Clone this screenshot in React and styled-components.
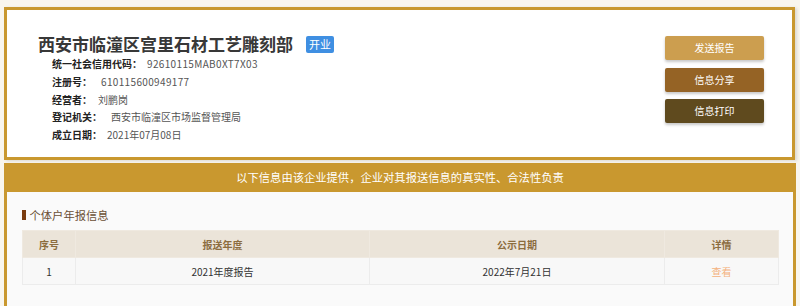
import React from "react";
import styled, { createGlobalStyle } from "styled-components";

const Global = createGlobalStyle`
  html, body { margin: 0; padding: 0; }
  body {
    background: #f9f6ee;
    font-family: "Noto Sans CJK SC", "Noto Sans", sans-serif;
    color: #333;
  }
`;

const Page = styled.div`
  padding: 7px 0 0 4px;
  width: 792px;
`;

const TopCard = styled.div`
  box-sizing: border-box;
  width: 791px;
  height: 153px;
  border: 3px solid #c9982f;
  background: #fff;
  box-shadow: 2px 1px 3px rgba(0, 0, 0, 0.12);
  display: flex;
  justify-content: space-between;
`;

const Info = styled.div`
  padding: 23px 0 0 31px;
`;

const TitleRow = styled.div`
  display: flex;
  align-items: center;
  gap: 13px;
  height: 22px;
`;

const Title = styled.h1`
  margin: 0;
  font-size: 17px;
  line-height: 22px;
  font-weight: 700;
  color: #383838;
`;

const Badge = styled.span`
  display: inline-flex;
  align-items: center;
  justify-content: center;
  width: 28px;
  height: 17px;
  border-radius: 2px;
  background: #3f8fe2;
  color: #fff;
  font-size: 11px;
  line-height: 17px;
`;

const Fields = styled.div`
  margin-left: 14px;
`;

const Field = styled.div`
  display: flex;
  align-items: center;
  height: 17.75px;
  font-size: 10px;
  line-height: 17.75px;
`;

const Label = styled.span`
  font-weight: 700;
  color: #222;
`;

const Value = styled.span`
  margin-left: ${(p) => p.$gap}px;
  color: #555;
  letter-spacing: ${(p) => (p.$latin ? "0.35px" : "0")};
`;

const Actions = styled.div`
  display: flex;
  flex-direction: column;
  gap: 7.5px;
  padding-top: 26px;
  margin-right: 28px;
`;

const ActionButton = styled.button`
  width: 99px;
  height: 24px;
  border: none;
  border-radius: 2px;
  background: ${(p) => p.$bg};
  color: #fff;
  font-family: inherit;
  font-size: 10px;
  line-height: 24px;
  padding: 0;
  box-shadow: 0 2px 3px rgba(0, 0, 0, 0.22);
  cursor: pointer;
`;

const Lower = styled.div`
  box-sizing: border-box;
  width: 792px;
  margin-top: 3px;
  border-left: 3px solid #c9982f;
  border-right: 3px solid #c9982f;
  background: #fafafa;
  padding-bottom: 22px;
`;

const Notice = styled.div`
  height: 29px;
  background: #c9982f;
  color: #fff;
  font-size: 11.3px;
  line-height: 29px;
  text-align: center;
`;

const Section = styled.div`
  padding: 14px 15px 0;
`;

const SectionTitle = styled.div`
  display: flex;
  align-items: center;
  gap: 4px;
  height: 18px;
  font-size: 11.3px;
  line-height: 18px;
  color: #6a4f35;
  &::before {
    content: "";
    width: 3.5px;
    height: 10px;
    background: #7a3c10;
  }
`;

const Table = styled.table`
  margin-top: 6px;
  width: 756px;
  border-collapse: collapse;
  table-layout: fixed;
  font-size: 10px;
`;

const Th = styled.th`
  height: 26px;
  padding: 0;
  background: #ebe4d9;
  color: #8c6d3f;
  font-weight: 600;
  border: 1px solid #efe9e0;
  text-align: center;
`;

const Td = styled.td`
  height: 26px;
  padding: 0;
  background: #f8f8f8;
  color: ${(p) => p.$color || "#333"};
  border: 1px solid #ececec;
  text-align: center;
`;

const fields = [
  ["统一社会信用代码：", "92610115MAB0XT7X03", 5, true],
  ["注册号：", "610115600949177", 9, true],
  ["经营者：", "刘鹏岗", 6, false],
  ["登记机关：", "西安市临潼区市场监督管理局", 9, false],
  ["成立日期：", "2021年07月08日", 5, false],
];

const buttons = [
  ["发送报告", "#cc9e4f"],
  ["信息分享", "#956325"],
  ["信息打印", "#5f4a1e"],
];

export default function App() {
  return (
    <>
      <Global />
      <Page>
        <TopCard>
          <Info>
            <TitleRow>
              <Title>西安市临潼区宫里石材工艺雕刻部</Title>
              <Badge>开业</Badge>
            </TitleRow>
            <Fields>
              {fields.map(([l, v, g, latin]) => (
                <Field key={l}>
                  <Label>{l}</Label>
                  <Value $gap={g} $latin={latin}>
                    {v}
                  </Value>
                </Field>
              ))}
            </Fields>
          </Info>
          <Actions>
            {buttons.map(([t, c]) => (
              <ActionButton key={t} $bg={c}>
                {t}
              </ActionButton>
            ))}
          </Actions>
        </TopCard>
        <Lower>
          <Notice>以下信息由该企业提供，企业对其报送信息的真实性、合法性负责</Notice>
          <Section>
            <SectionTitle>个体户年报信息</SectionTitle>
            <Table>
              <colgroup>
                <col style={{ width: 53 }} />
                <col style={{ width: 294 }} />
                <col style={{ width: 295 }} />
                <col style={{ width: 114 }} />
              </colgroup>
              <thead>
                <tr>
                  <Th>序号</Th>
                  <Th>报送年度</Th>
                  <Th>公示日期</Th>
                  <Th>详情</Th>
                </tr>
              </thead>
              <tbody>
                <tr>
                  <Td>1</Td>
                  <Td>2021年度报告</Td>
                  <Td>2022年7月21日</Td>
                  <Td $color="#f4b27c">查看</Td>
                </tr>
              </tbody>
            </Table>
          </Section>
        </Lower>
      </Page>
    </>
  );
}
